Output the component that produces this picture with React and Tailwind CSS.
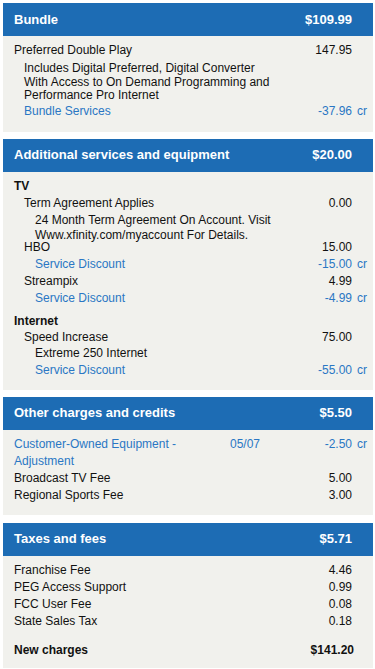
import React from "react";

const BLUE = "text-[#2a77c4]";

function Header({ title, amount }) {
  return (
    <div className="h-[33px] bg-[#1d6cb4] flex items-center pl-[11px] pr-[21px] text-white font-bold text-[13px]">
      <div className="flex-1">{title}</div>
      <div>{amount}</div>
    </div>
  );
}

function Row({ label, amount, cr, indent = 0, blue, bold, date, extra = "" }) {
  const pad = indent === 0 ? "pl-[11px]" : indent === 1 ? "pl-[21px]" : "pl-[32px]";
  return (
    <div className={`flex leading-[17px] ${pad} ${blue ? BLUE : "text-[#111]"} ${bold ? "font-bold" : ""} ${extra}`}>
      {date !== undefined ? (
        <>
          <div className="w-[216px]">{label}</div>
          <div className="flex-1">{date}</div>
        </>
      ) : (
        <div className="flex-1">{label}</div>
      )}
      <div className="text-right">{amount}</div>
      <div className="w-[21px] pl-[5px]">{cr ? "cr" : ""}</div>
    </div>
  );
}

function Desc({ children, indent = 1, extra = "mt-[3px]" }) {
  const pad = indent === 1 ? "pl-[21px]" : "pl-[32px]";
  return (
    <div className={`leading-[13.5px] text-[#111] ${pad} pr-[40px] ${extra}`}>{children}</div>
  );
}

export default function App() {
  return (
    <div
      className="w-[375px] min-h-[669px] bg-white pt-[3px] pl-[3px] pr-[2px] text-[12px]"
      style={{ fontFamily: '"Liberation Sans", Arial, Helvetica, sans-serif' }}
    >
      <Header title="Bundle" amount="$109.99" />
      <div className="bg-[#f1f1ed] pt-[6px] pb-[12px]">
        <Row label="Preferred Double Play" amount="147.95" />
        <Desc>
          Includes Digital Preferred, Digital Converter
          <br />
          With Access to On Demand Programming and
          <br />
          Performance Pro Internet
        </Desc>
        <Row label="Bundle Services" amount="-37.96" cr blue indent={1} />
      </div>

      <div className="h-[7px]" />
      <Header title="Additional services and equipment" amount="$20.00" />
      <div className="bg-[#f1f1ed] pt-[6px] pb-[11px]">
        <Row label="TV" bold />
        <Row label="Term Agreement Applies" amount="0.00" indent={1} />
        <Desc indent={2} extra="mt-[1px] leading-[15px]">
          24 Month Term Agreement On Account. Visit
          <br />
          Www.xfinity.com/myaccount For Details.
        </Desc>
        <Row label="HBO" amount="15.00" indent={1} extra="-mt-[4px]" />
        <Row label="Service Discount" amount="-15.00" cr blue indent={2} />
        <Row label="Streampix" amount="4.99" indent={1} />
        <Row label="Service Discount" amount="-4.99" cr blue indent={2} />
        <div className="h-[6px]" />
        <Row label="Internet" bold />
        <Row label="Speed Increase" amount="75.00" indent={1} extra="-mt-[1px]" />
        <Row label="Extreme 250 Internet" indent={2} extra="-mt-[1px]" />
        <Row label="Service Discount" amount="-55.00" cr blue indent={2} />
      </div>

      <div className="h-[7px]" />
      <Header title="Other charges and credits" amount="$5.50" />
      <div className="bg-[#f1f1ed] pt-[6px] pb-[11px]">
        <Row label="Customer-Owned Equipment - Adjustment" date="05/07" amount="-2.50" cr blue />
        <Row label="Broadcast TV Fee" amount="5.00" />
        <Row label="Regional Sports Fee" amount="3.00" />
      </div>

      <div className="h-[8px]" />
      <Header title="Taxes and fees" amount="$5.71" />
      <div className="bg-[#f1f1ed] pt-[6px] pb-[9px]">
        <Row label="Franchise Fee" amount="4.46" />
        <Row label="PEG Access Support" amount="0.99" />
        <Row label="FCC User Fee" amount="0.08" />
        <Row label="State Sales Tax" amount="0.18" />
        <div className="flex leading-[17px] pl-[11px] pr-[19px] mt-[12px] font-bold text-[#111]">
          <div className="flex-1">New charges</div>
          <div>$141.20</div>
        </div>
      </div>
    </div>
  );
}
